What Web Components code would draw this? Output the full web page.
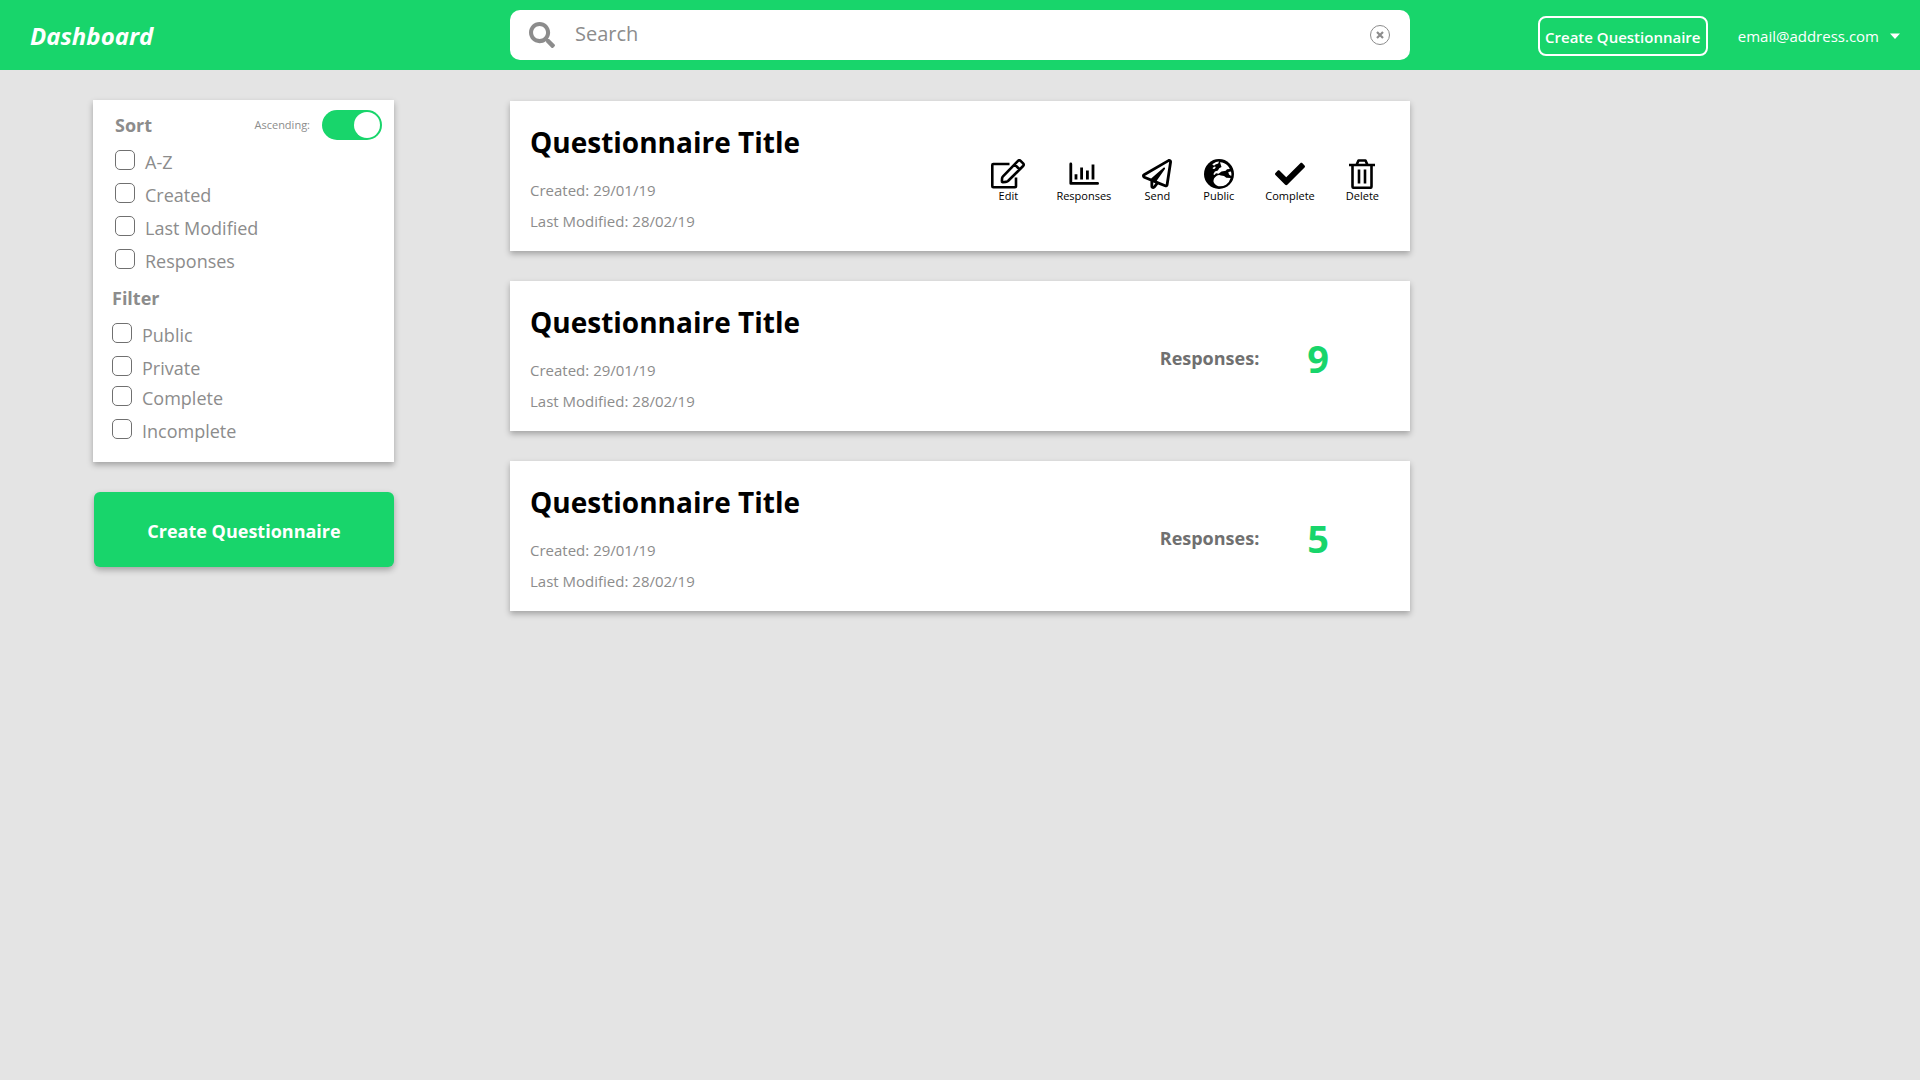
<!DOCTYPE html>
<html lang="en">
<head>
<meta charset="utf-8">
<meta name="viewport" content="width=device-width, initial-scale=1">
<title>Dashboard</title>
<style>
  :root {
    --green: #18d56b;
    --grey: #8c8c8c;
    --shadow: 0 3px 6px rgba(0, 0, 0, .29);
    --columns: minmax(0, 1fr) minmax(0, 900px) minmax(0, 1fr);
  }
  body {
    margin: 0;
    min-height: 100vh;
    background: #e4e4e4;
    font-family: "Open Sans", "Noto Sans", sans-serif;
    font-size: 15px;
  }
</style>
</head>
<body>
<dashboard-page></dashboard-page>

<script>
const define = (name, html, setup) => {
  const template = document.createElement('template');
  template.innerHTML = `<style>
    *, ::before, ::after { box-sizing: border-box; }
    button, input { font: inherit; color: inherit; margin: 0; }
    button { background: none; border: 0; padding: 0; cursor: pointer; }
    svg { display: block; }
  </style>` + html;
  customElements.define(name, class extends HTMLElement {
    constructor() {
      super();
      this.attachShadow({ mode: 'open' }).append(template.content.cloneNode(true));
    }
    connectedCallback() { if (setup) setup(this, this.shadowRoot); }
  });
};

const ICONS = {
  edit: ['0 0 34 30', 34, 30, `<g fill="none" stroke="currentColor" stroke-width="2.6" stroke-linejoin="round"><path d="M18.5 5H2.3Q1.3 5 1.3 6v21.3q0 1 1 1H24q1 0 1-1V18.5"/><path d="M12 17.4L27 1.9q1.3-1.2 2.6 0l2.5 2.5q1.2 1.3 0 2.6L17 22q-1 .8-2.2.9l-3 .3q-1 0-.9-1l.2-3q.1-1 .9-1.8zM23.6 5.4l5.1 5.1"/></g>`],
  chart: ['0 0 30 30', 30, 30, `<path fill="none" stroke="currentColor" stroke-width="2.8" stroke-linecap="round" stroke-linejoin="round" d="M1.8 5v19.4H28.600"/><path fill="currentColor" d="M5.6 15.300h2.800V20.400H5.600zM11.200 8.400h2.800V20.400h-2.800zM17 11.400h2.800V20.400h-2.800zM22.600 5.400h2.800V20.400h-2.800z"/>`],
  send: ['0 0 512 512', 30, 30, `<path fill="currentColor" d="M440 6.500L24 246.400c-34.400 19.900-31.100 70.800 5.700 85.900L144 379.600V464c0 46.400 59.200 65.500 86.600 28.600l43.800-59.100 111.900 46.200c5.900 2.400 12.100 3.600 18.300 3.600 8.200 0 16.300-2.100 23.600-6.200 12.800-7.200 21.600-20 23.900-34.500l59.400-387.200c6.100-40.100-36.900-68.800-71.500-48.900zM192 464v-64.600l36.600 15.100L192 464zm212.600-28.700l-153.800-63.500L391 169.500c10.700-15.500-9.500-33.500-23.700-21.200L155.800 332.600 48 288 464 48l-59.400 387.300z"/>`],
  globe: ['0 0 30 30', 30, 30, `<circle cx="15" cy="15" r="15" fill="currentColor"/><g fill="#fff"><path d="M8.200 5.200L12 3l3-.4-.8 2-2.700.8-1.500 1.400z"/><path d="M8.800 8.800l2-1.300 1 .6-1 1.700-2 .2z"/><path d="M16 3.200q4.500 0 7.800 3.600 1.200 1.500 2 3.200l-2.800.2-1.300 1.600-4.200.6-3 2.300-2.500-.4-1.400 1.800-1.300-.8 1.600-2.700 3-1 1.300-2.400 2.300-1.200z"/><path d="M24.300 13l2.700-.4q.6 2 .2 4.400l-2.200-1.500z"/><path d="M12.500 16.900q2.500-1.800 4.500-.4l3 .6 2.300 1.700 4.300.3q-1 4.300-4.600 6.600-3.500 2-7.500 1.500-3.800-1-5-4.400-.4-3.700 3-5.900z"/></g>`],
  check: ['0 0 512 512', 30, 30, `<path fill="currentColor" d="M173.898 439.404l-166.400-166.400c-9.997-9.997-9.997-26.206 0-36.204l36.203-36.204c9.997-9.998 26.207-9.998 36.204 0L192 312.690 432.095 72.596c9.997-9.997 26.207-9.997 36.204 0l36.203 36.204c9.997 9.997 9.997 26.206 0 36.204l-294.400 294.401c-9.998 9.997-26.207 9.997-36.204-.001z"/>`],
  trash: ['0 0 26 30', 26, 30, `<path fill="none" stroke="currentColor" stroke-width="2.600" stroke-linejoin="round" d="M0 6H26M3.500 6V27.500q0 1.300 1.300 1.300H21.200q1.300 0 1.300-1.300V6M7.500 6L9.500 1.500H16.500L18.500 6M10 10.500V24.500M16 10.500V24.500"/>`],
  search: ['0 0 512 512', 26, 26, `<path fill="currentColor" d="M505 442.700L405.300 343c-4.500-4.500-10.600-7-17-7H372c27.600-35.300 44-79.700 44-128C416 93.100 322.900 0 208 0S0 93.100 0 208s93.100 208 208 208c48.300 0 92.700-16.400 128-44v16.300c0 6.400 2.500 12.500 7 17l99.700 99.700c9.400 9.400 24.600 9.400 33.900 0l28.300-28.300c9.400-9.400 9.400-24.600.1-34zM208 336c-70.700 0-128-57.200-128-128 0-70.700 57.200-128 128-128 70.700 0 128 57.200 128 128 0 70.700-57.200 128-128 128z"/>`],
  clear: ['0 0 20 20', 20, 20, `<circle cx="10" cy="10" r="9.500" fill="none" stroke="currentColor"/><path d="M7 7l6 6M13 7l-6 6" stroke="currentColor" stroke-width="2.200"/>`],
  caret: ['0 0 10 6', 10, 6, `<path fill="currentColor" d="M0 .500H10L5 6z"/>`]
};

define('ui-icon', `<style>:host { display: block; flex: none; }</style><span aria-hidden="true"></span>`, (el, root) => {
  const [box, w, h, body] = ICONS[el.getAttribute('name')];
  root.querySelector('span').innerHTML = `<svg viewBox="${box}" width="${w}" height="${h}">${body}</svg>`;
});

define('search-box', `
  <style>
    :host { display: block; }
    form {
      display: flex; align-items: center; gap: 20px;
      height: 50px; padding: 0 20px 0 19px;
      background: #fff; border-radius: 10px; color: var(--grey);
    }
    input {
      flex: 1; min-width: 0; height: 50px; padding: 0 0 3px; border: 0; outline: 0;
      background: none; font-size: 20px;
    }
    input::placeholder { color: var(--grey); opacity: 1; }
  </style>
  <form role="search">
    <ui-icon name="search"></ui-icon>
    <input type="text" placeholder="Search" aria-label="Search">
    <button type="reset" aria-label="Clear search"><ui-icon name="clear"></ui-icon></button>
  </form>`);

define('page-header', `
  <style>
    :host { display: block; background: var(--green); color: #fff; }
    header { display: grid; grid-template-columns: var(--columns); align-items: center; min-height: 70px; }
    h1 { margin: 0; padding: 2px 0 0 30px; font-size: 24px; line-height: 36px; font-weight: 700; font-style: italic; }
    nav { display: flex; justify-content: flex-end; align-items: center; gap: 30px; padding: 2px 20px 0 0; white-space: nowrap; }
    .create { width: 170px; height: 40px; padding-top: 2px; border: 2px solid #fff; border-radius: 8px; font-weight: 600; }
    .account { display: flex; align-items: center; gap: 11px; }
  </style>
  <header>
    <h1>Dashboard</h1>
    <search-box></search-box>
    <nav>
      <button class="create">Create Questionnaire</button>
      <button class="account" aria-haspopup="menu">email@address.com <ui-icon name="caret"></ui-icon></button>
    </nav>
  </header>`);

define('check-option', `
  <style>
    :host { display: block; }
    label { display: flex; gap: 10px; height: 20px; font-size: 18px; line-height: 24px; }
    input {
      appearance: none; flex: none; width: 20px; height: 20px;
      border: 1px solid #707070; border-radius: 5px; background: #fff;
    }
    input:checked { background: var(--green); }
  </style>
  <label><input type="checkbox"><span><slot></slot></span></label>`);

define('toggle-switch', `
  <style>
    :host { display: block; }
    label { display: flex; align-items: center; gap: 12px; font-size: 11px; line-height: 30px; }
    input {
      appearance: none; display: flex; align-items: center; width: 60px; height: 30px;
      padding: 0 2px; border-radius: 15px; background: #b5b5b5;
    }
    input::before { content: ""; width: 26px; height: 26px; border-radius: 50%; background: #fff; }
    input:checked { background: var(--green); justify-content: flex-end; }
  </style>
  <label><slot></slot><input type="checkbox" role="switch" checked></label>`);

define('filter-panel', `
  <style>
    :host { display: block; padding: 10px 12px 23px 19px; background: #fff; box-shadow: var(--shadow); color: var(--grey); }
    section, .group { display: flex; flex-direction: column; gap: 13px; }
    .sort { padding-left: 3px; margin-bottom: 17px; }
    .filter { gap: 10px; }
    .head { display: flex; justify-content: space-between; align-items: center; margin-bottom: -3px; }
    h2 { margin: 0; font-size: 18px; line-height: 24px; }
  </style>
  <section class="sort">
    <div class="head"><h2>Sort</h2><toggle-switch>Ascending:</toggle-switch></div>
    <check-option>A-Z</check-option>
    <check-option>Created</check-option>
    <check-option>Last Modified</check-option>
    <check-option>Responses</check-option>
  </section>
  <section class="filter">
    <div class="group">
      <h2>Filter</h2>
      <check-option>Public</check-option>
      <check-option>Private</check-option>
    </div>
    <div class="group">
      <check-option>Complete</check-option>
      <check-option>Incomplete</check-option>
    </div>
  </section>`);

define('primary-button', `
  <style>
    :host { display: block; padding-left: 1px; }
    button {
      width: 100%; height: 75px; padding-top: 2px; border-radius: 6px;
      background: var(--green); box-shadow: var(--shadow);
      color: #fff; font-size: 18px; font-weight: 700;
    }
  </style>
  <button><slot></slot></button>`);

define('card-action', `
  <style>
    :host { display: block; }
    button { display: flex; flex-direction: column; align-items: center; color: #000; font-size: 11px; line-height: 14px; }
  </style>
  <button><slot name="icon"></slot><span><slot></slot></span></button>`);

define('card-actions', `
  <style>
    :host { display: flex; gap: 31px; padding: 10px 31px 0 0; }
  </style>
  <card-action><ui-icon slot="icon" name="edit"></ui-icon>Edit</card-action>
  <card-action><ui-icon slot="icon" name="chart"></ui-icon>Responses</card-action>
  <card-action><ui-icon slot="icon" name="send"></ui-icon>Send</card-action>
  <card-action><ui-icon slot="icon" name="globe"></ui-icon>Public</card-action>
  <card-action><ui-icon slot="icon" name="check"></ui-icon>Complete</card-action>
  <card-action><ui-icon slot="icon" name="trash"></ui-icon>Delete</card-action>`);

define('response-count', `
  <style>
    :host { display: flex; align-items: center; gap: 48px; padding: 4px 81px 0 0; font-weight: 700; }
    .label { color: #707070; font-size: 18px; line-height: 24px; }
    .count { color: var(--green); font-size: 38px; line-height: 48px; }
  </style>
  <span class="label">Responses:</span><span class="count"><slot></slot></span>`);

define('questionnaire-card', `
  <style>
    :host { display: block; background: #fff; box-shadow: var(--shadow); }
    article { display: flex; justify-content: space-between; align-items: center; min-height: 150px; padding-left: 20px; }
    h2 { margin: 0 0 15px; font-size: 28px; line-height: 36px; color: #000; }
    p { margin: 0; line-height: 31px; color: var(--grey); }
    .text { padding: 23px 0 14px; }
  </style>
  <article>
    <div class="text">
      <h2><slot name="title"></slot></h2>
      <p>Created: <slot name="created"></slot></p>
      <p>Last Modified: <slot name="modified"></slot></p>
    </div>
    <slot></slot>
  </article>`);

define('dashboard-page', `
  <style>
    :host { display: block; }
    .body { display: grid; grid-template-columns: var(--columns); align-items: start; padding: 30px 0; }
    aside { display: flex; flex-direction: column; gap: 30px; width: 301px; margin-left: 93px; }
    main { display: flex; flex-direction: column; gap: 30px; padding-top: 1px; }
  </style>
  <page-header></page-header>
  <div class="body">
    <aside>
      <filter-panel></filter-panel>
      <primary-button>Create Questionnaire</primary-button>
    </aside>
    <main>
      <questionnaire-card>
        <span slot="title">Questionnaire Title</span><span slot="created">29/01/19</span><span slot="modified">28/02/19</span>
        <card-actions></card-actions>
      </questionnaire-card>
      <questionnaire-card>
        <span slot="title">Questionnaire Title</span><span slot="created">29/01/19</span><span slot="modified">28/02/19</span>
        <response-count>9</response-count>
      </questionnaire-card>
      <questionnaire-card>
        <span slot="title">Questionnaire Title</span><span slot="created">29/01/19</span><span slot="modified">28/02/19</span>
        <response-count>5</response-count>
      </questionnaire-card>
    </main>
  </div>`);
</script>
</body>
</html>
